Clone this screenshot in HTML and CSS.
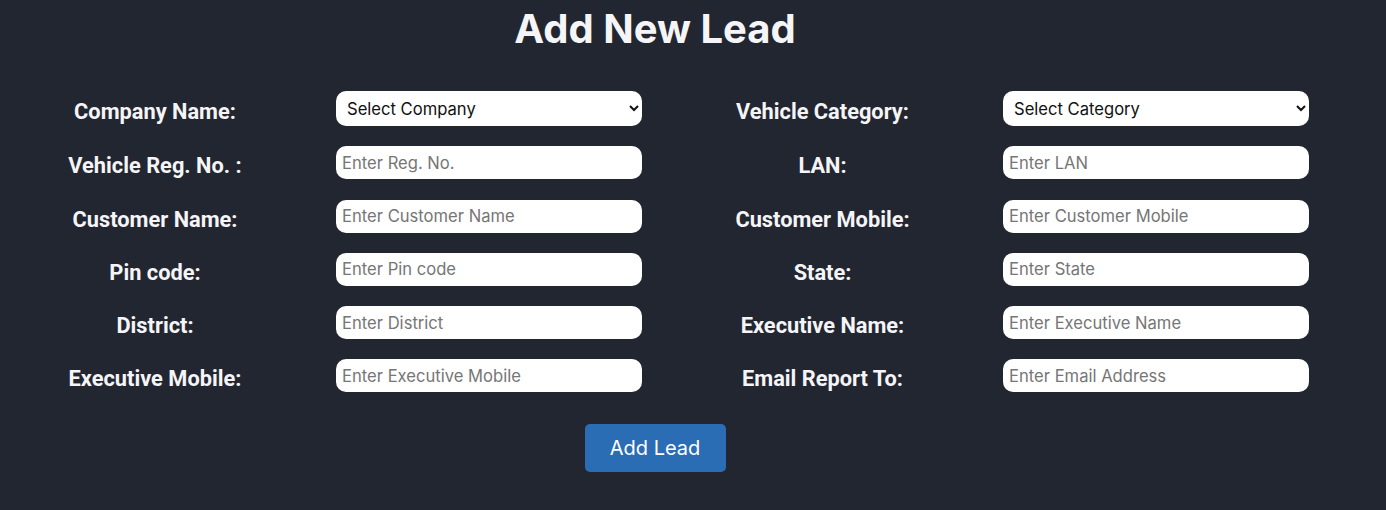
FILE: index.html
```html
<!DOCTYPE html>
<html lang="en">
<head>
    <meta charset="UTF-8">
    <meta name="viewport" content="width=device-width, initial-scale=1.0">
    <title>Add New Lead</title>
    <link rel="stylesheet" href="styles.css">
</head>
<body>
    <div class="main">
        <h1>Add New Lead</h1>
        <form class="lead-form" onsubmit="event.preventDefault()">
            <div class="fields">
                <label for="company">Company Name:</label>
                <select id="company" name="company">
                    <option>Select Company</option>
                </select>
                <label for="category">Vehicle Category:</label>
                <select id="category" name="category">
                    <option>Select Category</option>
                </select>

                <label for="regno">Vehicle Reg. No. :</label>
                <input type="text" id="regno" name="regno" placeholder="Enter Reg. No.">
                <label for="lan">LAN:</label>
                <input type="text" id="lan" name="lan" placeholder="Enter LAN">

                <label for="cname">Customer Name:</label>
                <input type="text" id="cname" name="cname" placeholder="Enter Customer Name">
                <label for="cmobile">Customer Mobile:</label>
                <input type="text" id="cmobile" name="cmobile" placeholder="Enter Customer Mobile">

                <label for="pincode">Pin code:</label>
                <input type="text" id="pincode" name="pincode" placeholder="Enter Pin code">
                <label for="state">State:</label>
                <input type="text" id="state" name="state" placeholder="Enter State">

                <label for="district">District:</label>
                <input type="text" id="district" name="district" placeholder="Enter District">
                <label for="ename">Executive Name:</label>
                <input type="text" id="ename" name="ename" placeholder="Enter Executive Name">

                <label for="emobile">Executive Mobile:</label>
                <input type="text" id="emobile" name="emobile" placeholder="Enter Executive Mobile">
                <label for="email">Email Report To:</label>
                <input type="text" id="email" name="email" placeholder="Enter Email Address">
            </div>
            <div class="actions">
                <button type="submit">Add Lead</button>
            </div>
        </form>
    </div>
</body>
</html>
```

FILE: styles.css
```css
body {
    font-family: Inter, "Noto Sans", sans-serif;
    background-color: #222631;
    color: #f3f4f6;
    margin: 0;
    height: 100vh;
}

.main {
    width: 1310px;
}

h1 {
    margin: 0;
    padding-top: 5px;
    text-align: center;
    font-size: 40px;
    font-weight: 700;
    line-height: 48px;
    color: #f5f5f7;
}

.lead-form {
    margin-top: 38px;
}

.fields {
    display: grid;
    grid-template-columns: 310px 306px 309px 306px;
    column-gap: 26px;
    row-gap: 20.3px;
    align-items: center;
}

.fields label {
    font-family: Roboto, "Liberation Sans", sans-serif;
    font-weight: 700;
    font-size: 21.8px;
    line-height: 26px;
    text-align: center;
    padding-top: 7px;
    color: #f5f5f7;
}

.fields input[type=text],
.fields select {
    width: 100%;
    box-sizing: border-box;
    height: 33px;
    border: none;
    border-radius: 10px;
    background-color: #ffffff;
    font-family: Inter, "Noto Sans", sans-serif;
    font-size: 16.6px;
    color: #111111;
}

.fields input[type=text] {
    padding: 0 6px;
}

.fields input::placeholder {
    color: #767676;
}

.fields select {
    height: 35px;
    padding: 0 8px 0 7px;
}

.actions {
    display: flex;
    justify-content: center;
    margin-top: 32px;
}

button {
    width: 141px;
    height: 48px;
    background-color: #2a6db4;
    color: #ffffff;
    border: none;
    border-radius: 5px;
    font-family: Inter, "Noto Sans", sans-serif;
    font-size: 20px;
    cursor: pointer;
}

button:hover {
    background-color: #245d9a;
}
```
